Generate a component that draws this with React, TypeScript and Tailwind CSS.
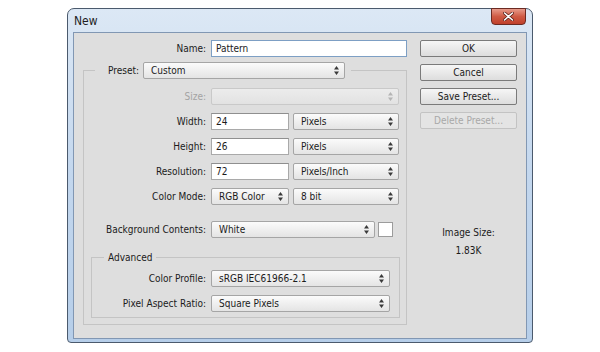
const font = "font-['DejaVu_Sans_Condensed','DejaVu_Sans',sans-serif]";

function Arrows({ disabled }: { disabled?: boolean }) {
  return (
    <svg width="5" height="9" viewBox="0 0 5 9" className="shrink-0">
      <path d="M2.5 0 L5 3.5 L0 3.5 Z M2.5 9 L5 5.5 L0 5.5 Z" fill={disabled ? "#b4b4b4" : "#3a3a3a"} />
    </svg>
  );
}

function Select({ w, value, disabled }: { w: string; value?: string; disabled?: boolean }) {
  return (
    <div
      className={`${w} h-[17px] flex items-center justify-between pl-[7px] pr-[5px] rounded-[2px] border ${
        disabled
          ? "border-[#c9c9c9] bg-gradient-to-b from-[#ececec] to-[#e2e2e2]"
          : "border-[#a5a5a5] bg-gradient-to-b from-[#fbfbfb] to-[#e4e4e4]"
      }`}
    >
      <span className="text-[#1b1b1b] leading-none whitespace-nowrap">{value}</span>
      <Arrows disabled={disabled} />
    </div>
  );
}

function Field({ w, value, focused }: { w: string; value: string; focused?: boolean }) {
  return (
    <div
      className={`${w} h-[17px] flex items-center pl-[4px] bg-white border ${
        focused ? "border-[#7d9fc4]" : "border-[#a9a9a9] border-t-[#8f8f8f]"
      }`}
    >
      <span className="text-[#1b1b1b] leading-none">{value}</span>
    </div>
  );
}

function Row({ label, lw, children, disabled }: { label: string; lw: string; children: React.ReactNode; disabled?: boolean }) {
  return (
    <div className="flex items-center h-[17px] gap-[5px]">
      <div className={`${lw} text-right whitespace-nowrap ${disabled ? "text-[#a3a3a3]" : "text-[#1b1b1b]"}`}>{label}</div>
      {children}
    </div>
  );
}

function Button({ label, disabled }: { label: string; disabled?: boolean }) {
  return (
    <div
      className={`w-[97px] h-[17px] flex items-center justify-center rounded-[2px] border ${
        disabled
          ? "border-[#c3c3c3] bg-[#e4e4e4] text-[#a8a8a8]"
          : "border-[#7a7a7a] bg-gradient-to-b from-[#f6f6f6] to-[#dddddd] text-[#1b1b1b]"
      }`}
    >
      {label}
    </div>
  );
}

export default function App() {
  return (
    <div className={`w-[600px] h-[352px] bg-white pt-[8px] pl-[67px] text-[10px] ${font}`}>
      <div className="w-[466px] h-[335px] rounded-t-[7px] rounded-b-[4px] border border-[#4b5a6d] bg-gradient-to-b from-[#dce8f5] via-[#c3d7ee] to-[#b6cee9] px-[5px] pb-[3px] flex flex-col">
        {/* title bar */}
        <div className="h-[23px] flex items-start justify-between">
          <div className="pl-[1px] pt-[6px] text-[12px] text-[#1e1e1e] leading-none">New</div>
          <div className="mr-[1px] w-[35px] h-[17px] -mt-[1px] rounded-b-[4px] border border-[#6b2a22] bg-gradient-to-b from-[#e69a8a] via-[#cf5a44] to-[#c0402b] flex items-center justify-center">
            <svg width="11" height="9" viewBox="0 0 11 9">
              <path d="M1.5 1 L9.5 8 M9.5 1 L1.5 8" stroke="#5b1f18" strokeWidth="3" strokeLinecap="round" />
              <path d="M1.5 1 L9.5 8 M9.5 1 L1.5 8" stroke="#ffffff" strokeWidth="1.6" strokeLinecap="round" />
            </svg>
          </div>
        </div>

        {/* client area */}
        <div className="flex-1 border border-[#8197b3] bg-[#dedede] flex">
          <div className="w-[334px] pt-[7px]">
            <Row label="Name:" lw="w-[132px]">
              <Field w="w-[196px]" value="Pattern" focused />
            </Row>

            <fieldset className="ml-[9px] mt-[5px] w-[324px] border border-[#c4c4c4] pb-[6px]">
              <legend className="ml-[11px] pl-[13px] pr-[6px]">
                <span className="flex items-center gap-[4px] h-[17px]">
                  <span className="text-[#1b1b1b]">Preset:</span>
                  <Select w="w-[202px]" value="Custom" />
                </span>
              </legend>

              <div className="mt-[9px] flex flex-col gap-[8px]">
                <Row label="Size:" lw="w-[122px]" disabled>
                  <Select w="w-[188px]" disabled />
                </Row>
                <Row label="Width:" lw="w-[122px]">
                  <Field w="w-[78px]" value="24" />
                  <div className="-ml-[1px]">
                    <Select w="w-[106px]" value="Pixels" />
                  </div>
                </Row>
                <Row label="Height:" lw="w-[122px]">
                  <Field w="w-[78px]" value="26" />
                  <div className="-ml-[1px]">
                    <Select w="w-[106px]" value="Pixels" />
                  </div>
                </Row>
                <Row label="Resolution:" lw="w-[122px]">
                  <Field w="w-[78px]" value="72" />
                  <div className="-ml-[1px]">
                    <Select w="w-[106px]" value="Pixels/Inch" />
                  </div>
                </Row>
                <Row label="Color Mode:" lw="w-[122px]">
                  <Select w="w-[78px]" value="RGB Color" />
                  <div className="-ml-[1px]">
                    <Select w="w-[106px]" value="8 bit" />
                  </div>
                </Row>
              </div>

              <div className="mt-[16px]">
                <Row label="Background Contents:" lw="w-[122px]">
                  <Select w="w-[164px]" value="White" />
                  <div className="-ml-[2px] w-[15px] h-[15px] bg-white border border-[#9c9c9c]" />
                </Row>
              </div>

              <fieldset className="ml-[7px] mt-[12px] w-[309px] border border-[#c4c4c4] pb-[5px]">
                <legend className="ml-[12px] px-[4px] text-[#1b1b1b]">Advanced</legend>
                <div className="mt-[5px] flex flex-col gap-[8px]">
                  <Row label="Color Profile:" lw="w-[114px]">
                    <Select w="w-[179px]" value="sRGB IEC61966-2.1" />
                  </Row>
                  <Row label="Pixel Aspect Ratio:" lw="w-[114px]">
                    <Select w="w-[179px]" value="Square Pixels" />
                  </Row>
                </div>
              </fieldset>
            </fieldset>
          </div>

          <div className="ml-[12px] pt-[7px] flex flex-col gap-[7px]">
            <Button label="OK" />
            <Button label="Cancel" />
            <Button label="Save Preset..." />
            <Button label="Delete Preset..." disabled />
            <div className="mt-[90px] flex flex-col items-center gap-[4px] text-[#1b1b1b] leading-[14px]">
              <div>Image Size:</div>
              <div>1.83K</div>
            </div>
          </div>
        </div>
      </div>
    </div>
  );
}
